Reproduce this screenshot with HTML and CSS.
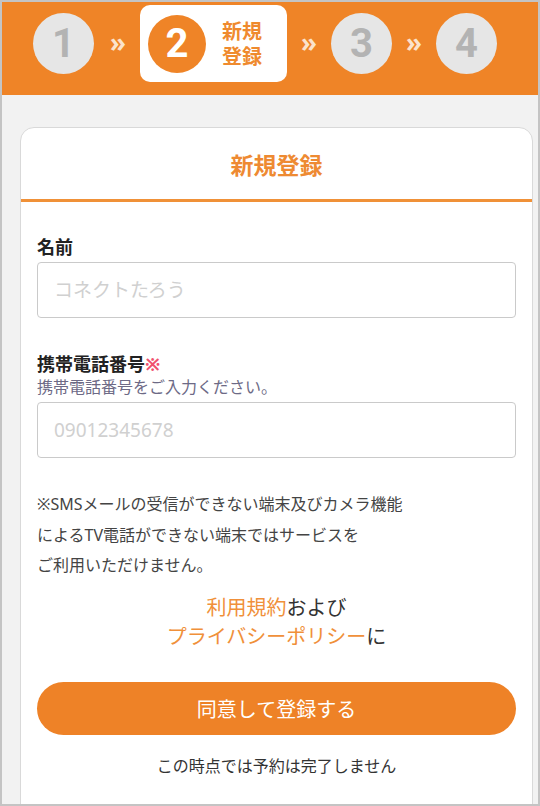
FILE: index.html
```html
<!DOCTYPE html>
<html lang="ja">
<head>
  <meta charset="UTF-8" />
  <meta name="viewport" content="width=device-width, initial-scale=1.0" />
  <title>新規登録</title>
  <link rel="stylesheet" href="styles.css">
</head>
<body>
  <div class="frame">
    <nav class="steps">
      <div class="step">1</div>
      <span class="sep">»</span>
      <div class="step-active">
        <div class="step step-current">2</div>
        <div class="step-label">新規<br>登録</div>
      </div>
      <span class="sep">»</span>
      <div class="step">3</div>
      <span class="sep">»</span>
      <div class="step">4</div>
    </nav>

    <main class="page">
      <section class="card">
        <h1 class="card-title">新規登録</h1>
        <form class="card-body">
          <label class="field-label" for="name">名前</label>
          <input class="field" type="text" id="name" placeholder="コネクトたろう" />

          <label class="field-label field-label-tel" for="tel">携帯電話番号<span class="req">※</span></label>
          <p class="field-hint">携帯電話番号をご入力ください。</p>
          <input class="field" type="tel" id="tel" placeholder="09012345678" />

          <p class="notice">※SMSメールの受信ができない端末及びカメラ機能<br>によるTV電話ができない端末ではサービスを<br>ご利用いただけません。</p>

          <p class="terms"><a href="#">利用規約</a>および<br><a href="#">プライバシーポリシー</a>に</p>

          <button type="button" class="submit">同意して登録する</button>
          <p class="caption">この時点では予約は完了しません</p>
        </form>
      </section>
    </main>
  </div>
</body>
</html>
```

FILE: styles.css
```css
body {
  margin: 0;
  font-family: "Noto Sans", "Noto Sans CJK JP", sans-serif;
  color: #333;
}
.frame {
  width: 540px;
  height: 806px;
  box-sizing: border-box;
  border: 2px solid #c4c4c4;
  background: #f2f2f2;
  overflow: hidden;
}
.steps {
  height: 93px;
  box-sizing: border-box;
  padding: 3px 0 13px 31px;
  background: #ef8427;
  display: flex;
  align-items: center;
  gap: 13px;
}
.step {
  width: 61px;
  height: 61px;
  border-radius: 50%;
  background: #e6e6e6;
  color: #b3b3b3;
  font-family: Roboto, sans-serif;
  font-weight: 700;
  font-size: 40px;
  display: flex;
  align-items: center;
  justify-content: center;
  flex-shrink: 0;
}
.sep {
  color: #fbe3cc;
  font-size: 26px;
  font-weight: 700;
  width: 18px;
  text-align: center;
  margin-top: -4px;
}
.sep:first-of-type {
  margin-left: 2px;
}
.step-active {
  width: 147px;
  height: 77px;
  box-sizing: border-box;
  background: #fff;
  border-radius: 10px;
  display: flex;
  align-items: center;
  padding-left: 8px;
}
.step-current {
  width: 58px;
  height: 58px;
  background: #ef8427;
  color: #fff;
}
.step-label {
  margin-left: 16px;
  color: #ef8a2e;
  font-size: 20px;
  font-weight: 700;
  line-height: 25px;
}
.page {
  padding: 32px 5px 0 18px;
}
.card {
  background: #fff;
  border: 1px solid #d9d9d9;
  border-radius: 14px;
  height: 720px;
}
.card-title {
  margin: 0;
  height: 71px;
  line-height: 74px;
  text-align: center;
  font-size: 23px;
  font-weight: 700;
  color: #ee8a32;
  border-bottom: 3px solid #f09138;
}
.card-body {
  padding: 33px 16px 0;
}
.field-label {
  display: block;
  font-size: 18px;
  font-weight: 700;
  color: #222;
  line-height: 24px;
  margin-bottom: 3px;
}
.field-label-tel {
  margin-top: 34px;
  margin-bottom: 0;
}
.req {
  color: #f0506e;
}
.field-hint {
  margin: 0 0 4px;
  font-size: 16px;
  line-height: 22px;
  color: #6d6a86;
}
.field {
  display: block;
  width: 100%;
  height: 56px;
  box-sizing: border-box;
  border: 1px solid #cacaca;
  border-radius: 4px;
  padding: 0 16px;
  font-family: inherit;
  font-size: 19px;
  color: #333;
}
.field::placeholder {
  color: #d0d0d0;
}
.notice {
  margin: 31px 0 0;
  font-size: 16px;
  line-height: 30.5px;
  color: #444;
}
.terms {
  margin: 12px 0 0;
  text-align: center;
  font-size: 20px;
  line-height: 29px;
  color: #333;
}
.terms a {
  color: #f0903a;
  text-decoration: none;
}
.submit {
  display: block;
  width: 100%;
  height: 53px;
  margin-top: 31px;
  border: none;
  border-radius: 27px;
  background: #ee8227;
  color: #fff;
  font-family: inherit;
  font-size: 20px;
}
.caption {
  margin: 18px 0 0;
  text-align: center;
  font-size: 16px;
  color: #333;
}
```
